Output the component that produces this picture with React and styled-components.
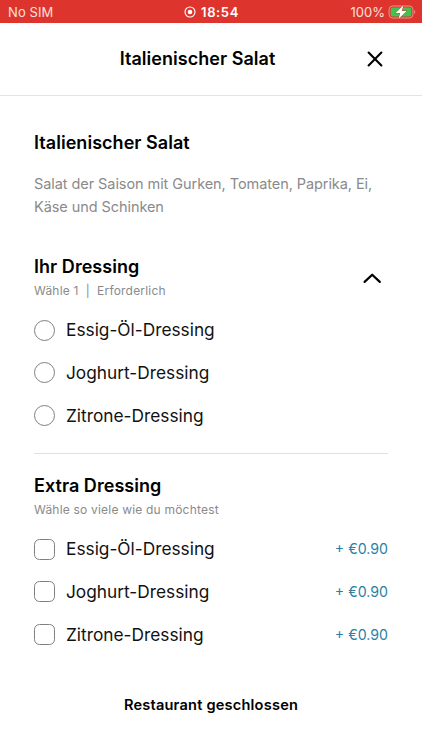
import React from "react";
import styled, { createGlobalStyle } from "styled-components";

const dressings = ["Essig-Öl-Dressing", "Joghurt-Dressing", "Zitrone-Dressing"];

const StatusBar = () => (
  <Status>
    <Carrier>No SIM</Carrier>
    <Clock>
      <svg width="12" height="12" viewBox="0 0 12 12">
        <circle cx="6" cy="6" r="5" fill="none" stroke="#fff" strokeWidth="1.1" />
        <circle cx="6" cy="6" r="2.3" fill="#fff" />
      </svg>
      <Time>18:54</Time>
    </Clock>
    <Power>
      <Percent>100%</Percent>
      <svg width="28" height="14" viewBox="0 0 28 14">
        <rect x="1.1" y="1" width="23.8" height="12" rx="3.4" fill="none" stroke="#ee918b" strokeWidth="1" />
        <rect x="2.7" y="2.6" width="20.6" height="8.8" rx="1.9" fill="#43c151" />
        <path d="M26.2 5.1c1.4.5 1.4 3.3 0 3.8z" fill="#ee918b" />
        <path
          d="M15.5.3 7.6 7.9h4.6L10.6 13.7l8-7.7h-4.9z"
          fill="#fff"
          stroke="#dd352d"
          strokeWidth="0.9"
          paintOrder="stroke"
        />
      </svg>
    </Power>
  </Status>
);

const OptionGroup = ({ title, hint, type, price, collapsible }) => (
  <Group>
    <GroupHeader>
      <div>
        <Heading>{title}</Heading>
        <Hint>{hint}</Hint>
      </div>
      {collapsible && (
        <Toggle aria-label="Einklappen">
          <svg width="20" height="12" viewBox="0 0 20 12">
            <path
              d="M2.6 9.9 10.2 2.7l7.6 7.2"
              fill="none"
              stroke="#000"
              strokeWidth="2.2"
              strokeLinecap="round"
              strokeLinejoin="round"
            />
          </svg>
        </Toggle>
      )}
    </GroupHeader>
    <Options>
      {dressings.map(name => (
        <Option key={name}>
          <Control $round={type === "radio"} />
          <OptionName>{name}</OptionName>
          {price && <Price>{price}</Price>}
        </Option>
      ))}
    </Options>
  </Group>
);

const App = () => (
  <Screen>
    <GlobalStyle />
    <StatusBar />
    <Header>
      <Heading>Italienischer Salat</Heading>
      <Close aria-label="Schließen">
        <svg width="16" height="16" viewBox="0 0 16 16">
          <path d="M1.6 1.6l12.8 12.8M14.4 1.6 1.6 14.4" stroke="#000" strokeWidth="2.1" strokeLinecap="round" />
        </svg>
      </Close>
    </Header>
    <Content>
      <Heading>Italienischer Salat</Heading>
      <Description>
        Salat der Saison mit Gurken, Tomaten, Paprika, Ei, Käse und Schinken
      </Description>
      <OptionGroup
        title="Ihr Dressing"
        hint={"Wähle 1 \u00a0|\u00a0 Erforderlich"}
        type="radio"
        collapsible
      />
      <Divider />
      <OptionGroup
        title="Extra Dressing"
        hint="Wähle so viele wie du möchtest"
        type="checkbox"
        price="+ €0.90"
      />
    </Content>
    <Footer>Restaurant geschlossen</Footer>
  </Screen>
);

export default App;

const GlobalStyle = createGlobalStyle`
  * {
    box-sizing: border-box;
  }
  body {
    margin: 0;
    background: #fff;
    font-family: Inter, "Liberation Sans", sans-serif;
  }
`;

const Screen = styled.div`
  display: flex;
  flex-direction: column;
  width: 100%;
  height: 750px;
  overflow: hidden;
  background: #fff;
  color: #000;
`;

const Status = styled.div`
  display: grid;
  grid-template-columns: 1fr auto 1fr;
  align-items: center;
  flex: none;
  height: 23px;
  padding: 1px 6px 0 8px;
  background: #dd352d;
  color: #fff;
  font-size: 13px;
`;

const Carrier = styled.span`
  color: #fbe0de;
  letter-spacing: 0.1px;
`;

const Clock = styled.div`
  display: flex;
  align-items: center;
  gap: 5px;
  margin-left: -1px;
`;

const Time = styled.span`
  font-weight: 600;
  letter-spacing: 0.6px;
`;

const Power = styled.div`
  display: flex;
  align-items: center;
  justify-content: flex-end;
  gap: 3px;
`;

const Percent = styled.span`
  color: #fbe0de;
`;

const Header = styled.header`
  display: grid;
  grid-template-columns: 1fr auto 1fr;
  align-items: center;
  flex: none;
  height: 73px;
  padding: 0 39px 0 12px;
  border-bottom: 1px solid #e4e4e4;

  > h2 {
    grid-column: 2;
  }
`;

const Heading = styled.h2`
  margin: 0;
  font-size: 18px;
  line-height: 24px;
  font-weight: 600;
  letter-spacing: 0.04px;
  white-space: nowrap;
`;

const Close = styled.button`
  display: flex;
  justify-self: end;
  padding: 0;
  border: 0;
  background: none;
`;

const Content = styled.main`
  flex: 1;
  padding: 35px 34px 0;
`;

const Description = styled.p`
  margin: 18px 0 36.8px;
  color: #8a8a8a;
  font-size: 14.5px;
  line-height: 22.5px;
  letter-spacing: -0.07px;
`;

const Group = styled.section`
  width: 100%;
`;

const GroupHeader = styled.div`
  display: flex;
  align-items: center;
  justify-content: space-between;
`;

const Hint = styled.div`
  margin-top: 3px;
  color: #8a8a8a;
  font-size: 12px;
  line-height: 18px;
  letter-spacing: 0.2px;
`;

const Toggle = styled.button`
  display: flex;
  margin: 1px 6px 0 0;
  padding: 0;
  border: 0;
  background: none;
`;

const Options = styled.div`
  display: flex;
  flex-direction: column;
  margin-top: 9px;
`;

const Option = styled.label`
  display: flex;
  align-items: center;
  height: 42.7px;
`;

const Control = styled.span`
  flex: none;
  width: 21px;
  height: 21px;
  border: 1px solid #808080;
  border-radius: ${props => (props.$round ? "50%" : "5.5px")};
`;

const OptionName = styled.span`
  margin-left: 11px;
  color: #111;
  font-size: 17.3px;
  line-height: 24px;
`;

const Price = styled.span`
  margin-left: auto;
  color: #2b7fa3;
  font-size: 14.2px;
  line-height: 18px;
`;

const Divider = styled.hr`
  height: 1px;
  margin: 16px 0 20px;
  border: 0;
  background: #e0e0e0;
`;

const Footer = styled.footer`
  display: flex;
  justify-content: center;
  flex: none;
  height: 56px;
  font-size: 14.6px;
  line-height: 22px;
  font-weight: 600;
  letter-spacing: 0.2px;
`;
